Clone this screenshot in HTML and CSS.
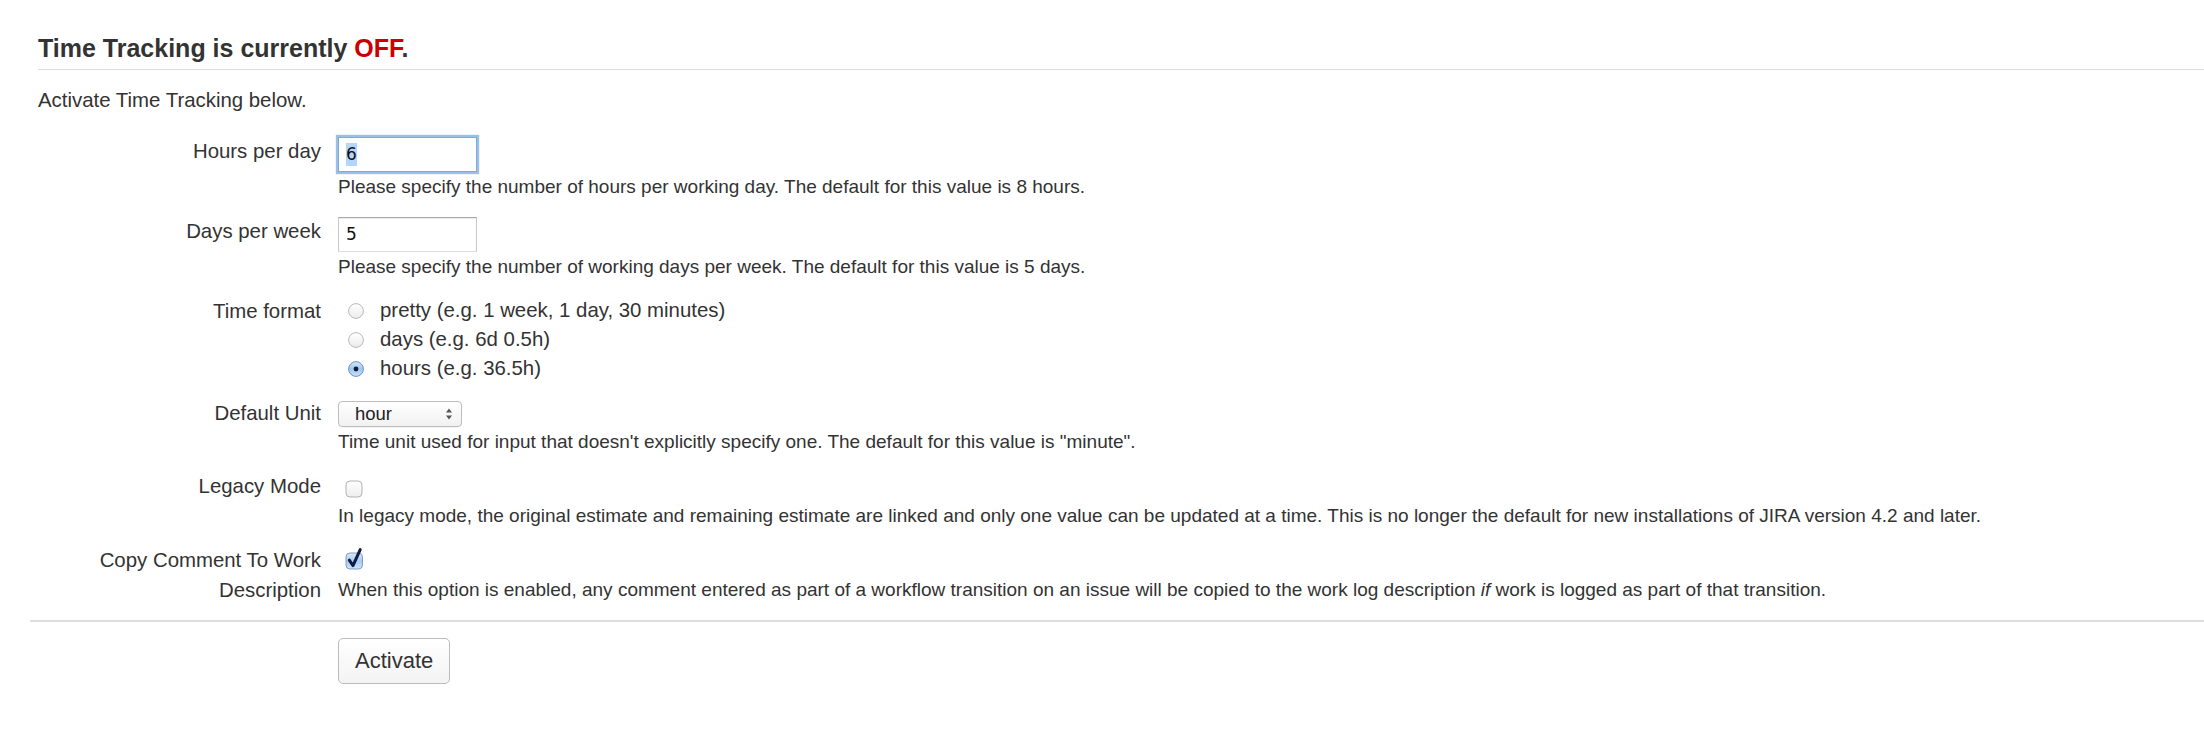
FILE: index.html
```html
<!DOCTYPE html>
<html lang="en">
<head>
<meta charset="utf-8">
<title>Time Tracking</title>
<link rel="stylesheet" href="styles.css">
</head>
<body>
<div class="page">
  <header class="page-header">
    <h2>Time Tracking is currently <span class="status-off">OFF</span>.</h2>
  </header>
  <p class="intro">Activate Time Tracking below.</p>

  <form class="tt-form">
    <div class="field-group">
      <div class="field-label">Hours per day</div>
      <div class="field">
        <span class="text-input is-focused"><span class="selected-text">6</span></span>
        <div class="description">Please specify the number of hours per working day. The default for this value is 8 hours.</div>
      </div>
    </div>

    <div class="field-group">
      <div class="field-label">Days per week</div>
      <div class="field">
        <span class="text-input">5</span>
        <div class="description">Please specify the number of working days per week. The default for this value is 5 days.</div>
      </div>
    </div>

    <div class="field-group">
      <div class="field-label">Time format</div>
      <div class="field">
        <div class="radio">
          <svg class="radio-icon" width="16" height="16" viewBox="0 0 16 16"><defs><linearGradient id="rg1" x1="0" y1="0" x2="0" y2="1"><stop offset="0" stop-color="#ffffff"/><stop offset="1" stop-color="#ececec"/></linearGradient></defs><circle cx="8" cy="8" r="7.4" fill="url(#rg1)" stroke="#b9b9b9" stroke-width="1"/></svg>
          <span>pretty (e.g. 1 week, 1 day, 30 minutes)</span>
        </div>
        <div class="radio">
          <svg class="radio-icon" width="16" height="16" viewBox="0 0 16 16"><circle cx="8" cy="8" r="7.4" fill="url(#rg1)" stroke="#b9b9b9" stroke-width="1"/></svg>
          <span>days (e.g. 6d 0.5h)</span>
        </div>
        <div class="radio">
          <svg class="radio-icon" width="16" height="16" viewBox="0 0 16 16"><defs><linearGradient id="rg2" x1="0" y1="0" x2="0" y2="1"><stop offset="0" stop-color="#d7e8fa"/><stop offset="0.5" stop-color="#9cc6f0"/><stop offset="1" stop-color="#c9e2fb"/></linearGradient></defs><circle cx="8" cy="8" r="7.4" fill="url(#rg2)" stroke="#6b93c4" stroke-width="1"/><circle cx="8" cy="8" r="2.4" fill="#141a33"/></svg>
          <span>hours (e.g. 36.5h)</span>
        </div>
      </div>
    </div>

    <div class="field-group">
      <div class="field-label">Default Unit</div>
      <div class="field">
        <span class="select">
          <span class="select-value">hour</span>
          <svg class="select-arrows" width="8" height="14" viewBox="0 0 8 14"><path d="M1 5.5 L4 1.5 L7 5.5 Z" fill="#555"/><path d="M1 8.5 L4 12.5 L7 8.5 Z" fill="#555"/></svg>
        </span>
        <div class="description">Time unit used for input that doesn't explicitly specify one. The default for this value is "minute".</div>
      </div>
    </div>

    <div class="field-group">
      <div class="field-label">Legacy Mode</div>
      <div class="field">
        <div class="check-line">
          <svg class="checkbox" width="18" height="18" viewBox="0 0 18 18"><defs><linearGradient id="cg1" x1="0" y1="0" x2="0" y2="1"><stop offset="0" stop-color="#ffffff"/><stop offset="1" stop-color="#ededed"/></linearGradient></defs><rect x="1" y="1" width="16" height="16" rx="4" fill="url(#cg1)" stroke="#b3b3b3" stroke-width="1"/></svg>
        </div>
        <div class="description">In legacy mode, the original estimate and remaining estimate are linked and only one value can be updated at a time. This is no longer the default for new installations of JIRA version 4.2 and later.</div>
      </div>
    </div>

    <div class="field-group">
      <div class="field-label">Copy Comment To Work Description</div>
      <div class="field">
        <div class="check-line check-line-tight">
          <svg class="checkbox" width="20" height="22" viewBox="0 0 20 22"><defs><linearGradient id="cg2" x1="0" y1="0" x2="0" y2="1"><stop offset="0" stop-color="#dbe9f8"/><stop offset="0.5" stop-color="#a9cbef"/><stop offset="1" stop-color="#cfe3f8"/></linearGradient></defs><rect x="1" y="5" width="16.5" height="16" rx="4" fill="url(#cg2)" stroke="#7f9fc3" stroke-width="1"/><path d="M4.3 12.2 L8 17.6 L15.2 1.6" fill="none" stroke="#0f1a45" stroke-width="3" stroke-linecap="round" stroke-linejoin="round"/></svg>
        </div>
        <div class="description">When this option is enabled, any comment entered as part of a workflow transition on an issue will be copied to the work log description <em>if</em> work is logged as part of that transition.</div>
      </div>
    </div>

    <div class="buttons">
      <button type="button" class="button">Activate</button>
    </div>
  </form>
</div>
</body>
</html>
```

FILE: styles.css
```css
html, body {
  margin: 0;
  padding: 0;
  background: #ffffff;
}

body {
  font-family: "Liberation Sans", Arial, Helvetica, sans-serif;
  font-size: 20.4px;
  line-height: 29px;
  color: #333333;
}

.page {
  padding-left: 30px;
}

.page-header {
  margin-left: 8px;
  padding-top: 33px;
  padding-bottom: 6px;
  border-bottom: 1px solid #dddddd;
}

.page-header h2 {
  margin: 0;
  font-size: 25px;
  line-height: 30px;
  font-weight: bold;
  color: #333333;
}

.status-off {
  color: #cc0000;
}

.intro {
  margin: 16px 0 0 8px;
}

.tt-form {
  margin: 21px 0 0 0;
}

.field-group {
  display: flex;
  gap: 17px;
  margin-bottom: 15px;
}

.field-label {
  flex: none;
  width: 291px;
  text-align: right;
  line-height: 30px;
}

.field {
  flex: 1;
  min-width: 0;
}

.description {
  font-size: 19px;
  line-height: 29px;
  white-space: nowrap;
}

.text-input {
  display: block;
  box-sizing: border-box;
  width: 139px;
  height: 35px;
  margin-top: 1px;
  padding-left: 7px;
  border: 1px solid #c9c9c9;
  border-top-color: #a9a9a9;
  border-bottom-color: #dedede;
  box-shadow: inset 0 1px 1px rgba(0, 0, 0, 0.08);
  background: #ffffff;
  font-family: "DejaVu Sans", "Liberation Sans", sans-serif;
  font-size: 17px;
  line-height: 33px;
  color: #111111;
}

.text-input.is-focused {
  border: 1px solid #7aaade;
  box-shadow: 0 0 1px 2px rgba(120, 170, 225, 0.75);
}

.selected-text {
  background: #b4d5fc;
  padding: 1px 0 2px;
}

.radio {
  display: flex;
  align-items: center;
  gap: 16px;
  padding-left: 10px;
  height: 29px;
}

.radio-icon {
  flex: none;
  display: block;
}

.select {
  display: flex;
  align-items: center;
  justify-content: space-between;
  box-sizing: border-box;
  width: 124px;
  height: 26px;
  margin-top: 3px;
  padding: 0 8px 0 16px;
  border: 1px solid #bdbdbd;
  border-radius: 4px;
  background: linear-gradient(#ffffff, #f1f1f1);
  box-shadow: 0 1px 0 rgba(0, 0, 0, 0.04);
  font-size: 18.5px;
  line-height: 24px;
  color: #222222;
}

.select-arrows {
  display: block;
  flex: none;
}

.check-line {
  height: 30px;
  padding-left: 7px;
  box-sizing: border-box;
  padding-top: 9px;
}

.check-line-tight {
  padding-top: 3px;
}

.checkbox {
  display: block;
  overflow: visible;
}

.buttons {
  border-top: 2px solid #dddddd;
  padding: 16px 0 0 308px;
}

.button {
  box-sizing: border-box;
  height: 46px;
  padding: 0 16px;
  border: 1px solid #bcbcbc;
  border-radius: 5px;
  background: linear-gradient(#ffffff, #f3f3f3);
  font-family: "Liberation Sans", Arial, Helvetica, sans-serif;
  font-size: 22px;
  color: #333333;
  cursor: pointer;
}
```
